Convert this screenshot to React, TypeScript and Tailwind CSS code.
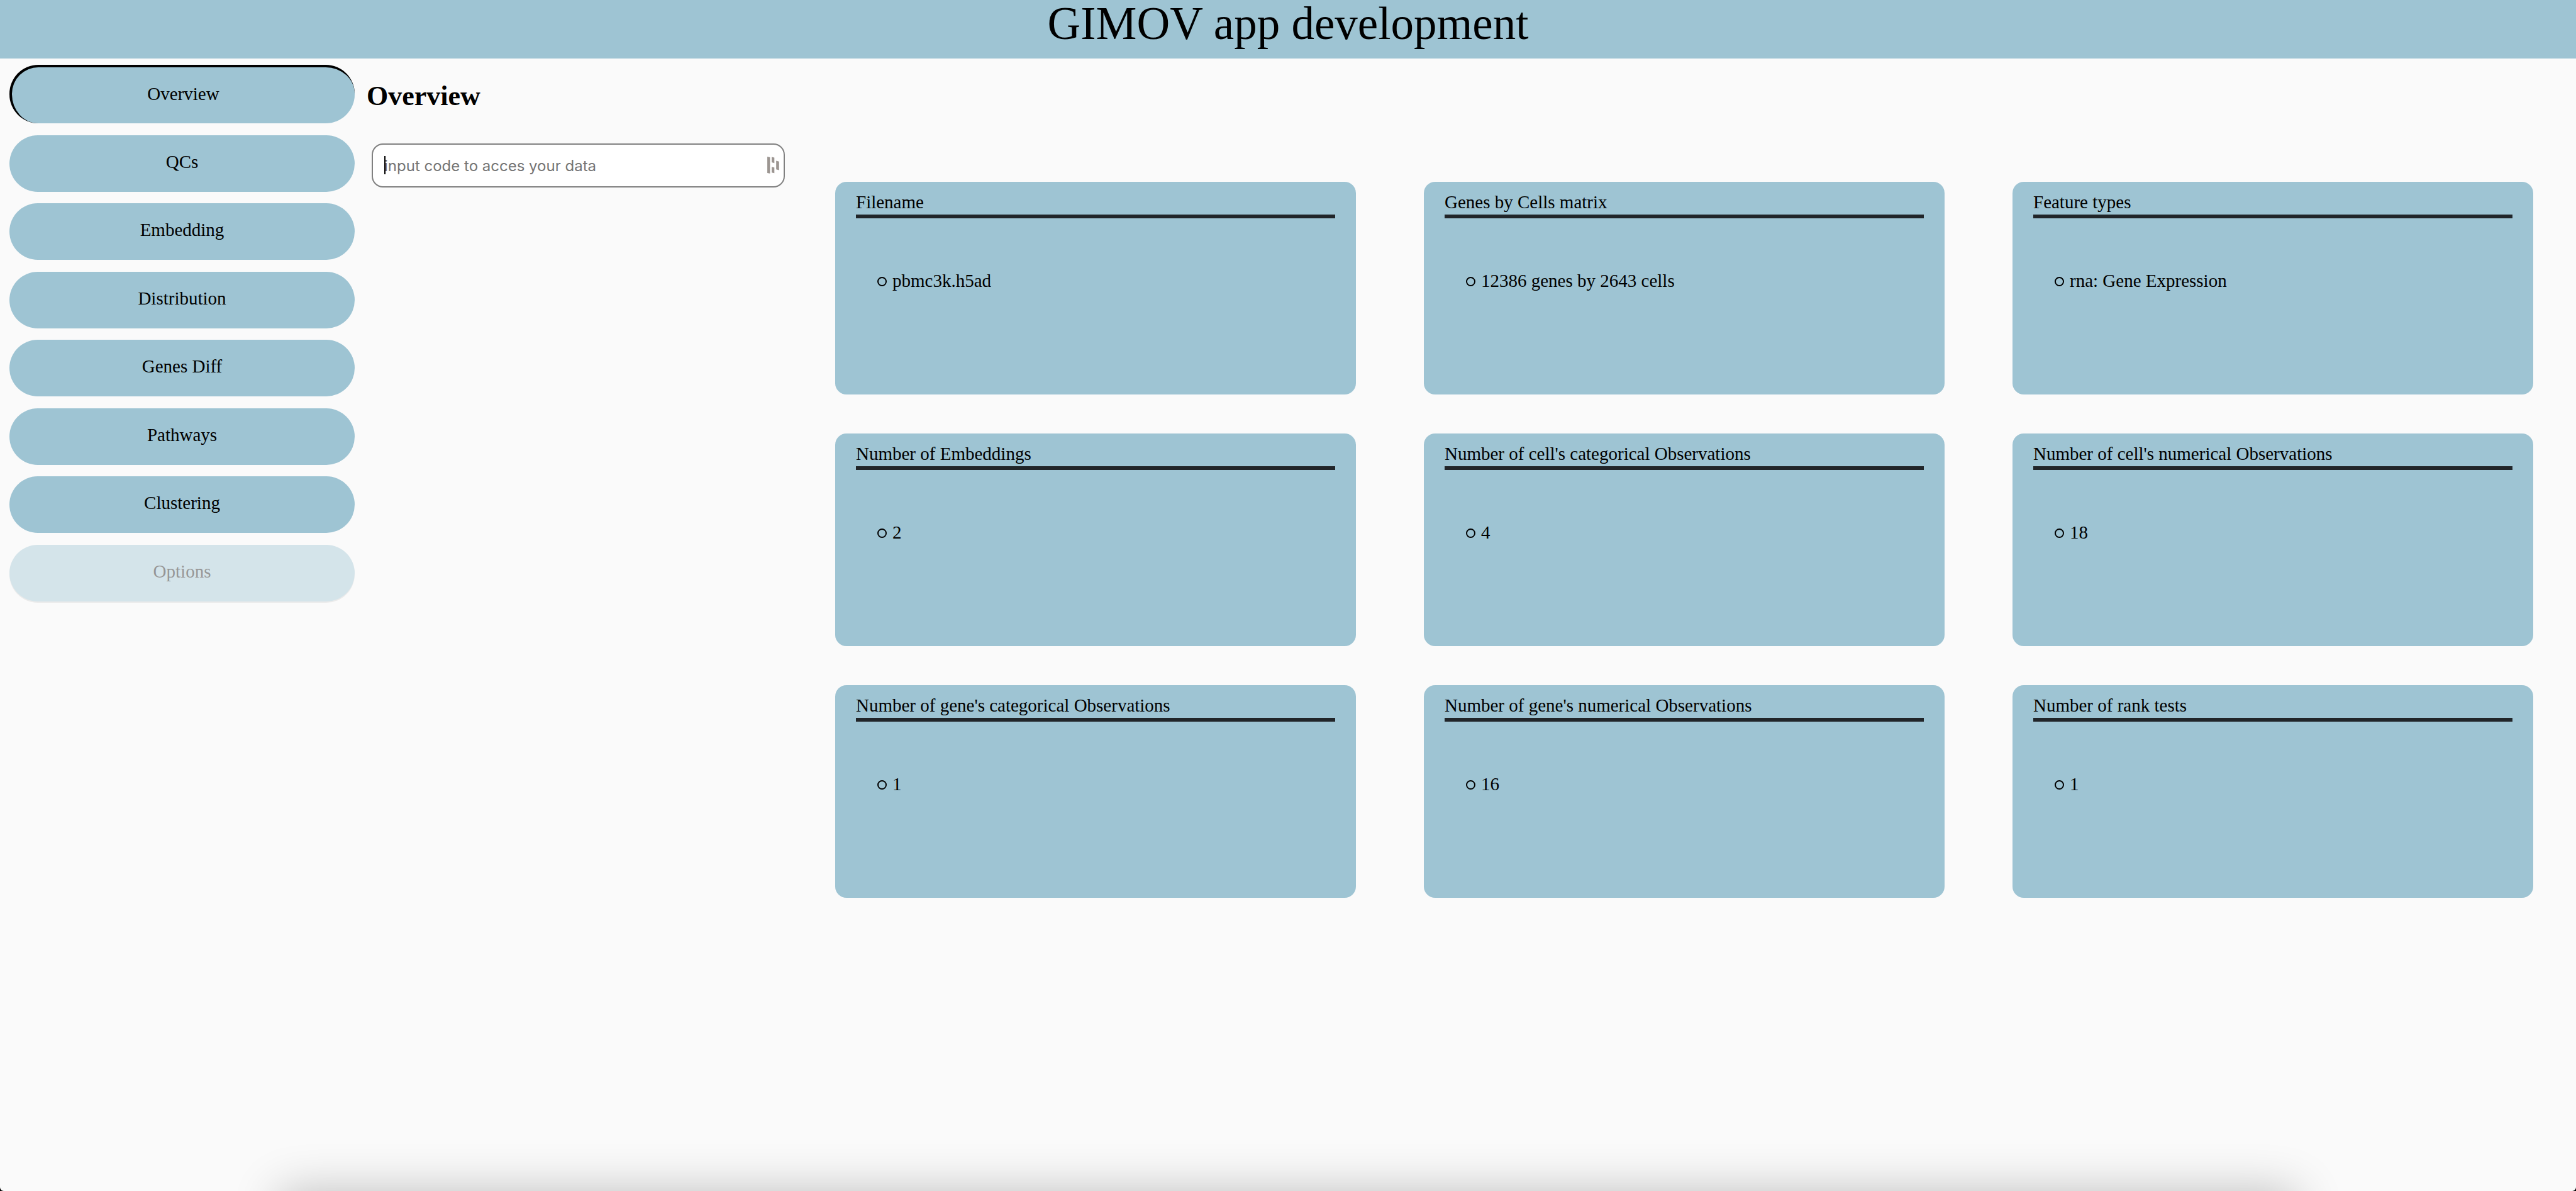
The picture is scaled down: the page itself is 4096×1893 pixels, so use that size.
import React from "react";

const tabs = [
  "Overview",
  "QCs",
  "Embedding",
  "Distribution",
  "Genes Diff",
  "Pathways",
  "Clustering",
];

const cards = [
  { title: "Filename", value: "pbmc3k.h5ad" },
  { title: "Genes by Cells matrix", value: "12386 genes by 2643 cells" },
  { title: "Feature types", value: "rna: Gene Expression" },
  { title: "Number of Embeddings", value: "2" },
  { title: "Number of cell's categorical Observations", value: "4" },
  { title: "Number of cell's numerical Observations", value: "18" },
  { title: "Number of gene's categorical Observations", value: "1" },
  { title: "Number of gene's numerical Observations", value: "16" },
  { title: "Number of rank tests", value: "1" },
];

function SideNav() {
  return (
    <nav className="flex min-h-[853px] w-[549px] shrink-0 flex-col justify-between self-start">
      {tabs.map((tab, i) => (
        <button
          key={tab}
          type="button"
          className={
            i === 0
              ? "h-[93px] rounded-[46px] border-t-4 border-l-4 border-black bg-[#9ec4d3] pb-[5px]"
              : "h-[90px] rounded-[46px] bg-[#9ec4d3] pb-[5px]"
          }
        >
          {tab}
        </button>
      ))}
      <button
        type="button"
        disabled
        className="h-[90px] rounded-[46px] bg-[#9ec4d3] pb-[5px] opacity-40 shadow-[0_2px_0_rgba(0,0,0,0.15)]"
      >
        Options
      </button>
    </nav>
  );
}

function CodeInput() {
  return (
    <div className="relative mt-[50px] ml-2">
      <input
        type="text"
        aria-label="Access code"
        placeholder="input code to acces your data"
        className="h-[70px] w-full rounded-[18px] border-2 border-[#808080] bg-white px-[18px] font-['Inter',sans-serif] text-[24px] text-black outline-none placeholder:text-[#757575] placeholder:opacity-100"
      />
      <span className="absolute top-[20px] left-[20px] h-[29px] w-[2px] bg-black" />
      <svg
        viewBox="0 0 21 30"
        className="absolute top-[21px] right-[9px] h-[27px] w-[19px]"
        fill="#9c9591"
        aria-hidden="true"
      >
        <path d="M0 0L4.800 1V29.700L0 29Z" />
        <path d="M7.700 0.500L12.500 1.800V11.500L7.700 10Z" />
        <path d="M7.700 18L12.500 19.300V29.300L7.700 28Z" />
        <path d="M15.700 7.200L20.800 8.500V24L15.700 22.500Z" />
      </svg>
    </div>
  );
}

function Card({ title, value }: { title: string; value: string }) {
  return (
    <section className="h-[338px] rounded-[18px] bg-[#9ec4d3] px-[33px] pt-4">
      <h3 className="border-b-[6px] border-[#212529] pb-[3px] leading-[33px]">{title}</h3>
      <ul className="mt-[83px] pl-[34px]">
        <li className="flex items-center gap-[9px] leading-[33px]">
          <span className="mt-0.5 size-[15px] rounded-full border-2 border-black" />
          {value}
        </li>
      </ul>
    </section>
  );
}

export default function App() {
  return (
    <div className="min-h-screen bg-black">
      <div className="relative flex min-h-screen flex-col overflow-hidden rounded-b-[6px] bg-[#fafafa] font-['Liberation_Serif',serif] text-[29px] leading-[33px] text-black">
        <header className="h-[93px] bg-[#9ec4d3] text-center">
          <h1 className="text-[73px] leading-[76px]">GIMOV app development</h1>
        </header>
        <div className="flex items-start pt-[10px] pr-[68px] pl-[15px]">
          <SideNav />
          <main className="flex min-w-0 flex-1 items-start pl-[19px]">
            <div className="w-[665px] shrink-0 pt-[25px]">
              <h2 className="text-[44px] leading-[50px] font-bold">Overview</h2>
              <CodeInput />
            </div>
            <div className="ml-[80px] grid flex-1 grid-cols-3 gap-x-[108px] gap-y-[62px] pt-[186px]">
              {cards.map((card) => (
                <Card key={card.title} title={card.title} value={card.value} />
              ))}
            </div>
          </main>
        </div>
        <div className="pointer-events-none absolute top-full right-[444px] left-[444px] h-[200px] shadow-[0_0_75px_rgba(0,0,0,0.24)]" />
      </div>
    </div>
  );
}
